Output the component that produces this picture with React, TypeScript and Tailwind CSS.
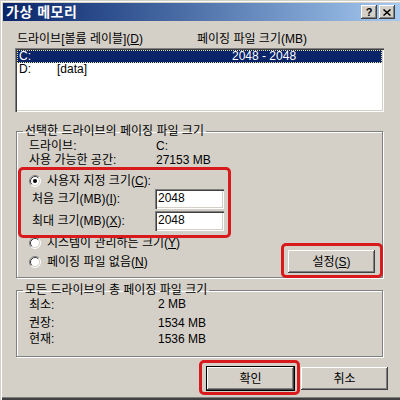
import type { ReactNode } from 'react';

const raised =
  'shadow-[inset_-1px_-1px_0_#404040,inset_1px_1px_0_#fff,inset_-2px_-2px_0_#808080,inset_2px_2px_0_#d4d0c8]';
const sunken =
  'shadow-[inset_1px_1px_0_#808080,inset_2px_2px_0_#404040,inset_-1px_-1px_0_#fff,inset_-2px_-2px_0_#d4d0c8]';
const etched = 'border border-[#808080] shadow-[inset_1px_1px_0_#fff,1px_1px_0_#fff]';

function Radio({ checked }: { checked?: boolean }) {
  return (
    <svg width="12" height="12" viewBox="0 0 12 12" className="shrink-0">
      <circle cx="6" cy="6" r="5" fill="#fff" />
      <path d="M2.11 9.89 A5.5 5.5 0 0 1 9.89 2.11" stroke="#808080" fill="none" />
      <path d="M9.89 2.11 A5.5 5.5 0 0 1 2.11 9.89" stroke="#fff" fill="none" />
      <path d="M2.82 9.18 A4.5 4.5 0 0 1 9.18 2.82" stroke="#404040" fill="none" />
      <path d="M9.18 2.82 A4.5 4.5 0 0 1 2.82 9.18" stroke="#d4d0c8" fill="none" />
      {checked && <circle cx="6" cy="6" r="2" fill="#000" />}
    </svg>
  );
}

function Btn({ children, def }: { children: ReactNode; def?: boolean }) {
  return (
    <div
      className={`w-[87px] h-[23px] flex items-center justify-center bg-[#d4d0c8] ${raised} ${
        def ? 'outline outline-1 outline-black' : ''
      }`}
    >
      {children}
    </div>
  );
}

function Field({ value }: { value: string }) {
  return (
    <div className={`w-[69px] h-[20px] bg-white pl-[3px] pt-[2px] leading-[14px] ${sunken}`}>{value}</div>
  );
}

export default function App() {
  return (
    <div className="relative w-[400px] h-[400px] overflow-hidden bg-[#d4d0c8] text-black text-[12px] leading-[14px] font-['Liberation_Sans','Noto_Sans_CJK_KR',sans-serif] shadow-[inset_1px_1px_0_#d4d0c8,inset_2px_2px_0_#fff,inset_0_-2px_0_#404040,inset_0_-3px_0_#808080]">
      {/* title bar */}
      <div className="ml-[3px] mt-[3px] h-[18px] flex items-center justify-between pl-[3px] pr-[5px] bg-gradient-to-r from-[#0a246a] to-[#a6caf0]">
        <span className="text-white font-bold text-[14px] tracking-[0.5px]">가상 메모리</span>
        <div className="flex gap-[2px]">
          <div className={`w-[16px] h-[14px] bg-[#d4d0c8] flex items-center justify-center text-[11px] font-bold leading-none ${raised}`}>?</div>
          <div className={`w-[16px] h-[14px] bg-[#d4d0c8] flex items-center justify-center ${raised}`}>
            <svg width="8" height="7" viewBox="0 0 8 7">
              <path d="M0.5 0.5 L7.5 6.5 M7.5 0.5 L0.5 6.5" stroke="#000" strokeWidth="1.5" />
            </svg>
          </div>
        </div>
      </div>

      {/* column headers */}
      <div className="mt-[11px] flex pl-[17px] h-[14px]">
        <span className="w-[180px]">
          드라이브[볼륨 레이블](<u>D</u>)
        </span>
        <span>페이징 파일 크기(MB)</span>
      </div>

      {/* drive list */}
      <div className={`mt-[2px] ml-[15px] w-[369px] h-[64px] bg-white p-[2px] leading-[13px] ${sunken}`}>
        <div className="grid grid-cols-[38px_175px_1fr] h-[13px] pl-[2px] bg-[#0a246a] text-white outline outline-1 outline-dotted outline-[#e8e0a0] -outline-offset-1">
          <span>C:</span>
          <span></span>
          <span>2048 - 2048</span>
        </div>
        <div className="grid grid-cols-[38px_175px_1fr] h-[13px] pl-[2px]">
          <span>D:</span>
          <span>[data]</span>
          <span></span>
        </div>
      </div>

      {/* selected drive group */}
      <fieldset className={`mt-[12px] ml-[16px] w-[367px] pb-[4px] ${etched}`}>
        <legend className="ml-[6px] px-[2px] leading-[14px]">선택한 드라이브의 페이징 파일 크기</legend>
        <div className="pl-[12px]">
          <div className="flex mt-[1px]">
            <span className="w-[127px]">드라이브:</span>
            <span>C:</span>
          </div>
          <div className="flex">
            <span className="w-[127px]">사용 가능한 공간:</span>
            <span>27153 MB</span>
          </div>
          <div className="flex items-center gap-[6px] mt-[7px]">
            <Radio checked />
            <span>
              사용자 지정 크기(<u>C</u>):
            </span>
          </div>
          <div className="flex items-center mt-[1px] pl-[3px] h-[20px]">
            <span className="w-[123px]">
              처음 크기(MB)(<u>I</u>):
            </span>
            <Field value="2048" />
          </div>
          <div className="flex items-center mt-[2px] pl-[3px] h-[20px]">
            <span className="w-[123px]">
              최대 크기(MB)(<u>X</u>):
            </span>
            <Field value="2048" />
          </div>
          <div className="flex justify-between items-start mt-[5px] pr-[7px]">
            <div className="flex flex-col gap-[5px]">
              <div className="flex items-center gap-[6px]">
                <Radio />
                <span>
                  시스템이 관리하는 크기(<u>Y</u>)
                </span>
              </div>
              <div className="flex items-center gap-[6px]">
                <Radio />
                <span>
                  페이징 파일 없음(<u>N</u>)
                </span>
              </div>
            </div>
            <div className="mt-[14px]">
              <Btn>
                설정(<u>S</u>)
              </Btn>
            </div>
          </div>
        </div>
      </fieldset>

      {/* totals group */}
      <fieldset className={`mt-[5px] ml-[16px] w-[367px] pb-[10px] ${etched}`}>
        <legend className="ml-[6px] px-[2px] leading-[14px]">모든 드라이브의 총 페이징 파일 크기</legend>
        <div className="pl-[12px]">
          <div className="flex mt-[1px]">
            <span className="w-[129px]">최소:</span>
            <span className="-mt-[1px]">2 MB</span>
          </div>
          <div className="flex mt-[4px]">
            <span className="w-[129px]">권장:</span>
            <span>1534 MB</span>
          </div>
          <div className="flex mt-[2px]">
            <span className="w-[129px]">현재:</span>
            <span>1536 MB</span>
          </div>
        </div>
      </fieldset>

      {/* dialog buttons */}
      <div className="mt-[10px] flex justify-end gap-[7px] pr-[12px]">
        <Btn def>확인</Btn>
        <Btn>취소</Btn>
      </div>

      {/* red annotation boxes */}
      <div className="absolute left-[18px] top-[167px] w-[213px] h-[71px] border-[3px] border-[#d81a1c] rounded-[5px]" />
      <div className="absolute left-[281px] top-[243px] w-[102px] h-[35px] border-[3px] border-[#d81a1c] rounded-[5px]" />
      <div className="absolute left-[199px] top-[360px] w-[101px] h-[35px] border-[3px] border-[#d81a1c] rounded-[5px]" />
    </div>
  );
}
